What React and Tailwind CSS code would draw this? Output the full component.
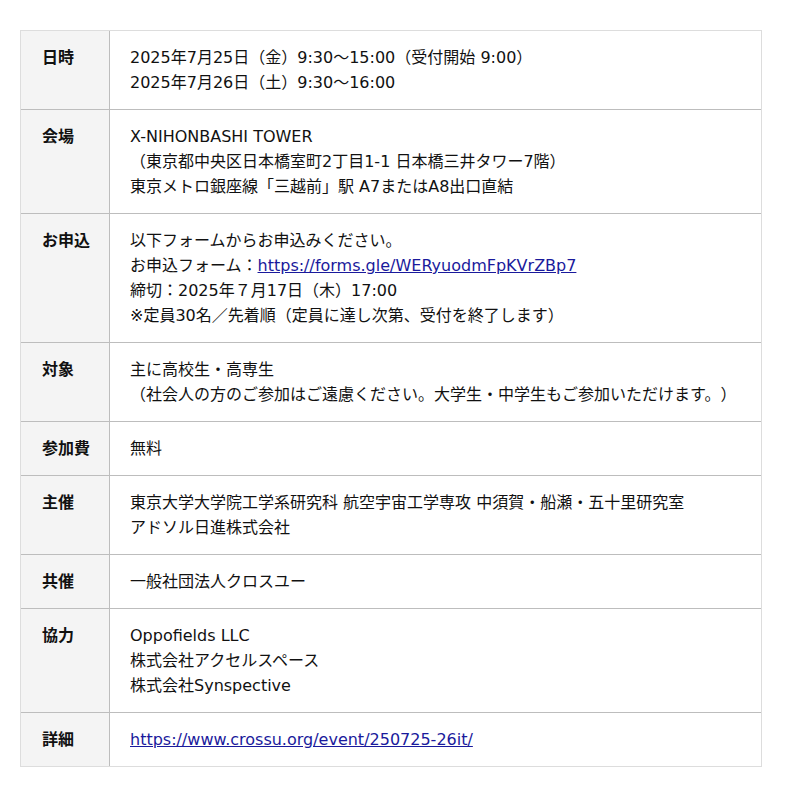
import React from 'react'

const rows = [
  {
    label: '日時',
    lines: ['2025年7月25日（金）9:30〜15:00（受付開始 9:00）', '2025年7月26日（土）9:30〜16:00'],
  },
  {
    label: '会場',
    lines: [
      'X-NIHONBASHI TOWER',
      '（東京都中央区日本橋室町2丁目1-1 日本橋三井タワー7階）',
      '東京メトロ銀座線「三越前」駅 A7またはA8出口直結',
    ],
  },
  {
    label: 'お申込',
    lines: [
      '以下フォームからお申込みください。',
      <>
        お申込フォーム：
        <a href="#" className="text-[#1a1a9c] underline">
          https://forms.gle/WERyuodmFpKVrZBp7
        </a>
      </>,
      '締切：2025年７月17日（木）17:00',
      '※定員30名／先着順（定員に達し次第、受付を終了します）',
    ],
  },
  {
    label: '対象',
    lines: ['主に高校生・高専生', '（社会人の方のご参加はご遠慮ください。大学生・中学生もご参加いただけます。）'],
  },
  { label: '参加費', lines: ['無料'] },
  {
    label: '主催',
    lines: ['東京大学大学院工学系研究科 航空宇宙工学専攻 中須賀・船瀬・五十里研究室', 'アドソル日進株式会社'],
  },
  { label: '共催', lines: ['一般社団法人クロスユー'] },
  {
    label: '協力',
    lines: ['Oppofields LLC', '株式会社アクセルスペース', '株式会社Synspective'],
  },
  {
    label: '詳細',
    lines: [
      <a href="#" className="text-[#1a1a9c] underline">
        https://www.crossu.org/event/250725-26it/
      </a>,
    ],
  },
]

export default function App() {
  return (
    <div
      className="min-h-screen bg-white px-5 pt-[30px] text-[16px] leading-[25px] text-[#111] [text-spacing-trim:space-all]"
      style={{ fontFamily: '"DejaVu Sans", "Noto Sans CJK JP", sans-serif' }}
    >
      <div className="w-[742px] border border-[#dddddd]">
        {rows.map((row, i) => (
          <div
            key={row.label}
            className={`flex ${i < rows.length - 1 ? 'border-b border-[#bdbdbd]' : ''}`}
          >
            <div className="w-[89px] shrink-0 whitespace-nowrap border-r border-[#bdbdbd] bg-[#f4f4f4] px-[21px] py-[14px] font-bold">
              {row.label}
            </div>
            <div className="flex-1 px-5 py-[14px]">
              {row.lines.map((line, j) => (
                <div key={j}>{line}</div>
              ))}
            </div>
          </div>
        ))}
      </div>
    </div>
  )
}
